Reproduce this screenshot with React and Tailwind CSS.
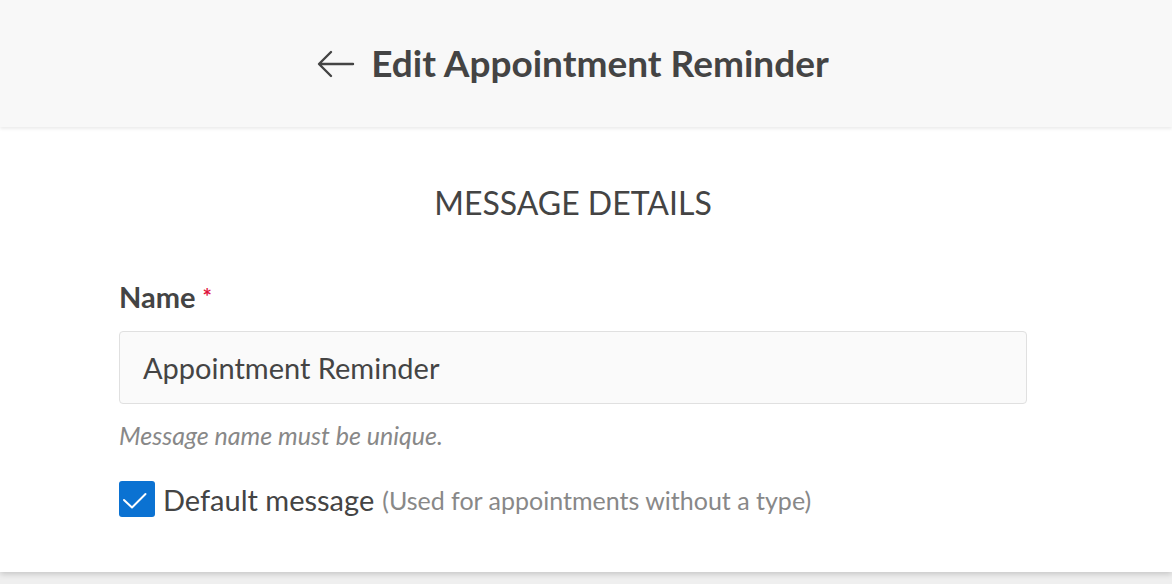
export default function App() {
  return (
    <div className="min-h-[584px] w-[1172px] bg-[#efefef] font-['Lato',sans-serif] text-[#444]">
      {/* Header */}
      <div className="relative z-10 flex h-[127px] items-center justify-center bg-[#f8f8f8] pr-[26px] shadow-[0_2px_3px_rgba(0,0,0,0.08)]">
        <div className="flex items-center gap-[16px]">
          <svg width="38" height="28" viewBox="0 0 38 28" fill="none" stroke="#444" strokeWidth="2.4" strokeLinecap="round" strokeLinejoin="round">
            <path d="M36 14H3M14 2L2 14l12 12" />
          </svg>
          <h1 className="pb-[3px] text-[37px] font-bold leading-none">Edit Appointment Reminder</h1>
        </div>
      </div>

      {/* Card */}
      <div className="h-[445px] bg-white shadow-[0_2px_6px_rgba(0,0,0,0.18)]">
        <div className="w-[908px] ml-[119px] pt-[57px]">
          <h2 className="text-center text-[32px] leading-[38px] uppercase">Message Details</h2>

          <label className="mt-[59px] block text-[29px] font-bold leading-[32px]">
            Name<span className="ml-[7px] align-top text-[22px] text-[#e0143c]">*</span>
          </label>

          <div className="mt-[18px] flex h-[73px] items-center rounded-[4px] border border-[#e0e0e0] bg-[#fafafa] px-[23px] text-[29px]">
            Appointment Reminder
          </div>

          <p className="mt-[16px] text-[25px] italic leading-[30px] text-[#888]">Message name must be unique.</p>

          <div className="mt-[31px] flex items-center gap-[8px]">
            <span className="h-[36px] w-[36px] rounded-[3px] bg-[#0b72d2]">
              <svg width="36" height="36" viewBox="0 0 36 36" fill="none" stroke="white" strokeWidth="2" strokeLinecap="round" strokeLinejoin="round">
                <path d="M5 19l8 7.5L26.5 13" />
              </svg>
            </span>
            <span className="text-[29px] leading-none">Default message</span>
            <span className="pt-[3px] text-[25px] leading-none text-[#888]">(Used for appointments without a type)</span>
          </div>
        </div>
      </div>
    </div>
  );
}
